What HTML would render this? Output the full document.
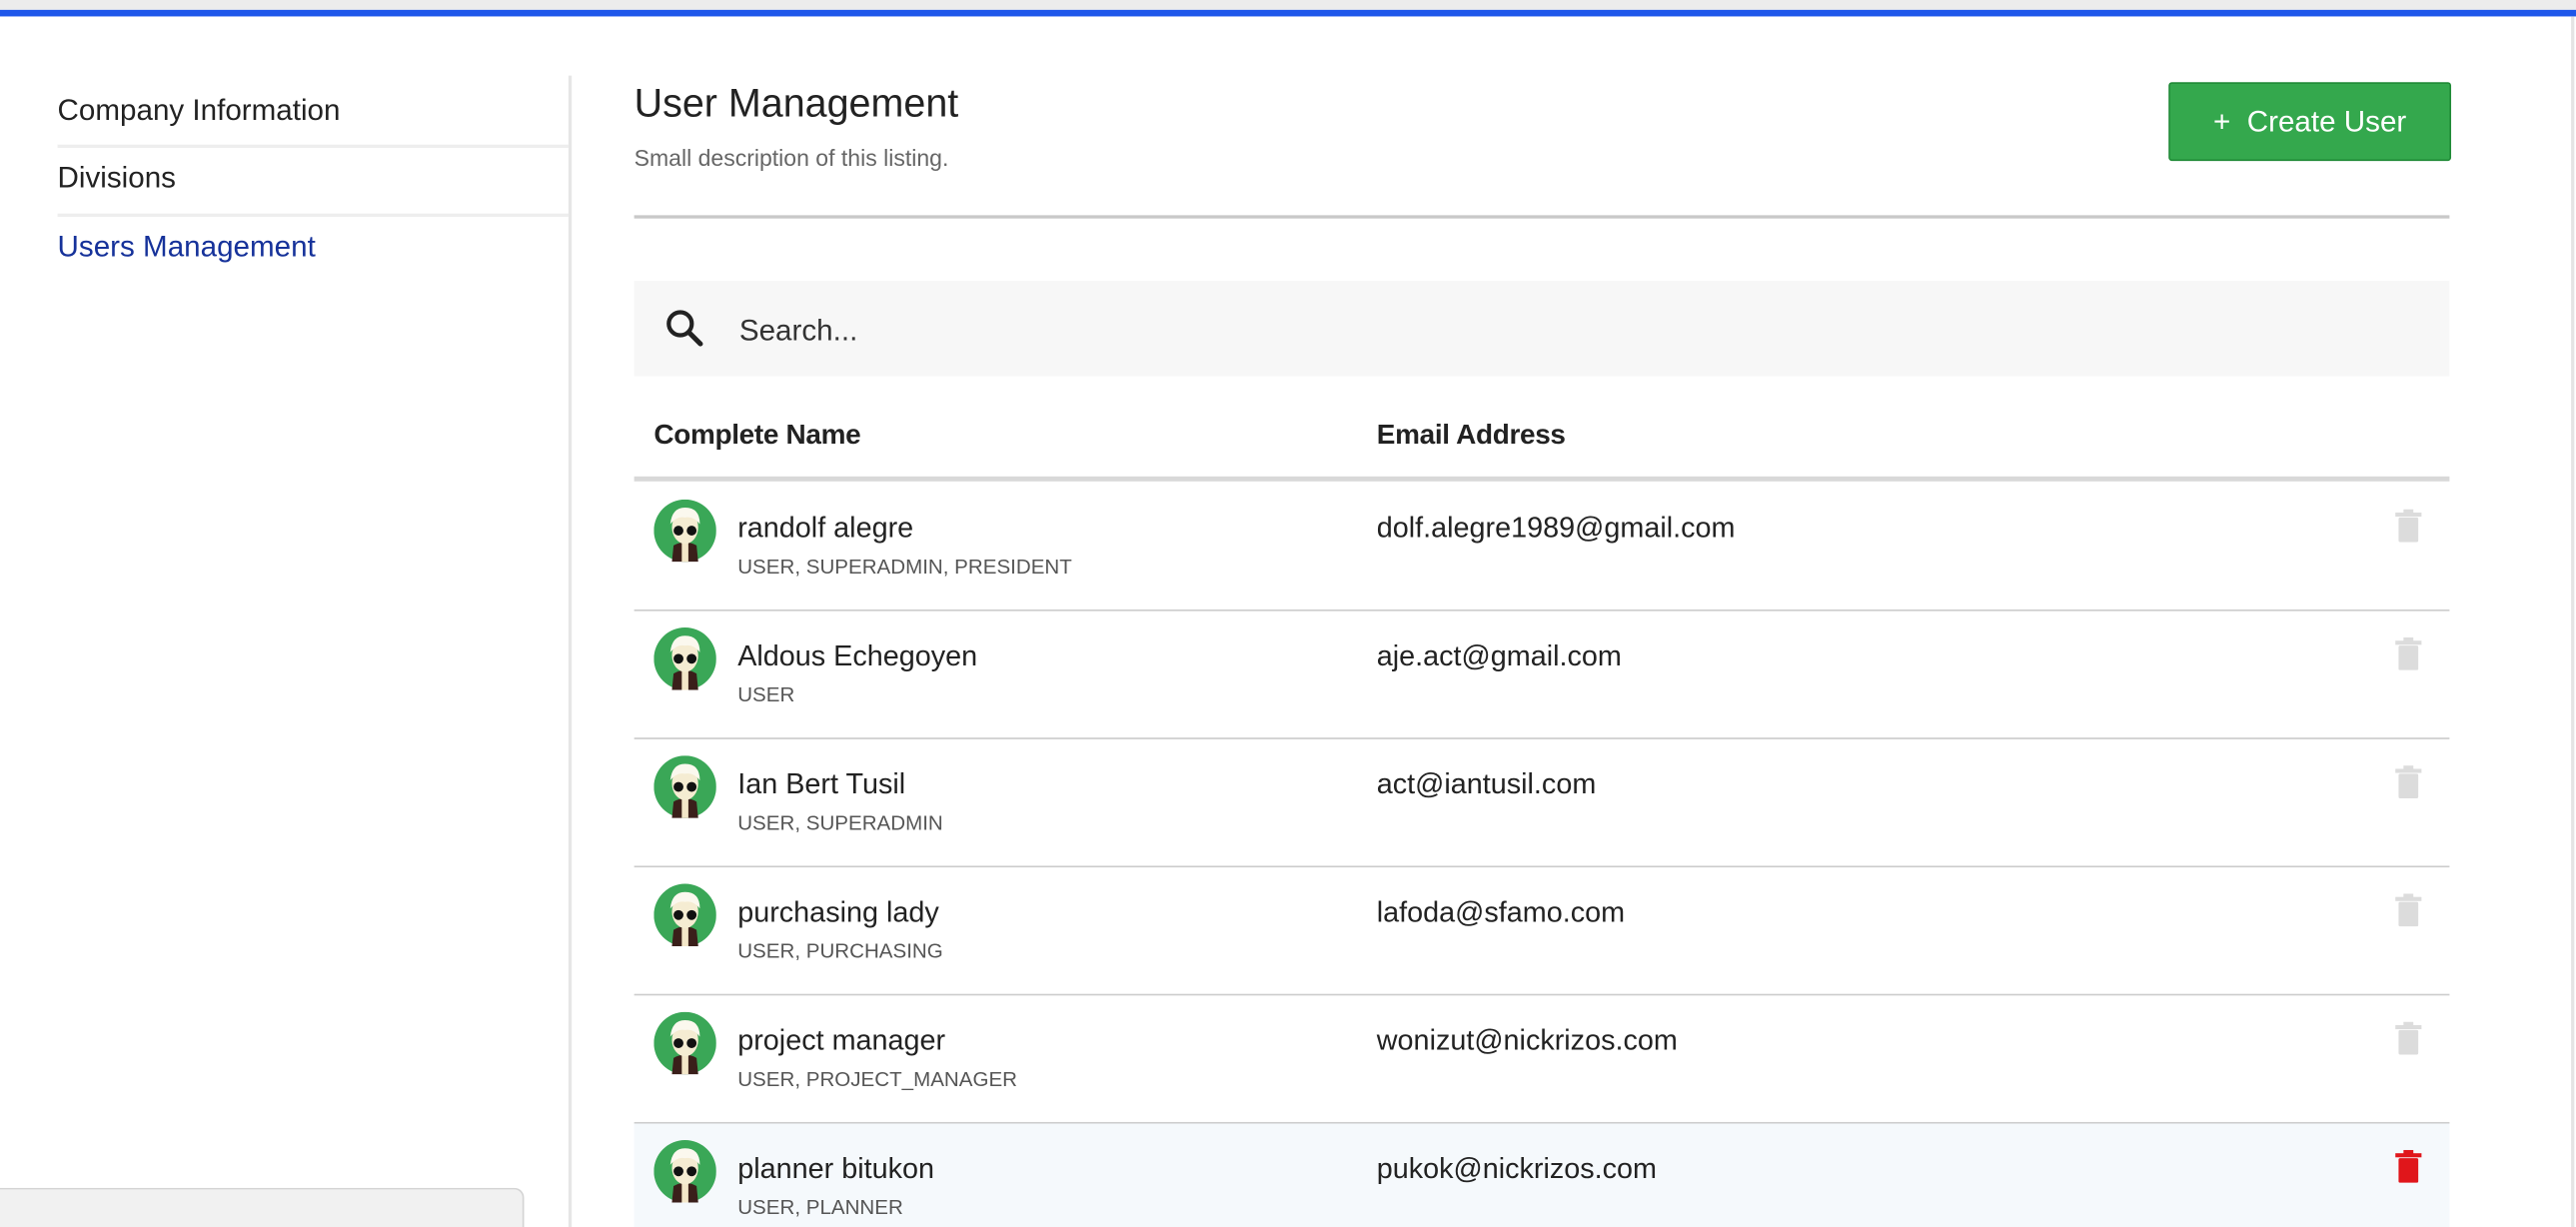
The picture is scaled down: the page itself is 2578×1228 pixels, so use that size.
<!DOCTYPE html>
<html><head><meta charset="utf-8"><style>
html,body{margin:0;padding:0;background:#fff;overflow:hidden}
body{width:2578px;height:1228px;position:relative}
#w{position:absolute;left:0;top:0;width:1568px;height:747px;transform:scale(1.64413);transform-origin:0 0;font-family:"Liberation Sans",sans-serif;color:#222}
.a{position:absolute}
.nav{position:absolute;left:35px;font-size:18px;color:#222;white-space:nowrap}
.dv{position:absolute;left:35px;width:311px;height:2px;background:#eee}
.row{position:absolute;left:386px;width:1105px;height:77px;border-bottom:1.5px solid #ccc}
.av{position:absolute;left:12px;top:10px;width:38px;height:38px}
.nm{position:absolute;left:63px;top:17px;font-size:17.5px;color:#222;white-space:nowrap}
.rl{position:absolute;left:63px;top:44px;font-size:12.5px;color:#555;white-space:nowrap}
.em{position:absolute;left:452px;top:17px;font-size:17.5px;color:#222;white-space:nowrap}
.tr{position:absolute;left:1072px;top:16px;width:16px;height:20px}
</style></head><body><div id="w">
<div class="a" style="left:0;top:0;width:1568px;height:6px;background:#ececec"></div>
<div class="a" style="left:0;top:6px;width:1568px;height:4px;background:#1f57ea"></div>
<div class="a" style="left:1565px;top:10px;width:2px;height:737px;background:#e4e4e4"></div>

<div class="nav" style="top:57px">Company Information</div>
<div class="dv" style="top:88px"></div>
<div class="nav" style="top:98px">Divisions</div>
<div class="dv" style="top:130px"></div>
<div class="nav" style="top:140px;color:#16329a">Users Management</div>
<div class="a" style="left:346px;top:46px;width:1.5px;height:701px;background:#e6e6e6"></div>
<div class="a" style="left:0;top:723px;width:318px;height:30px;background:#f1f1f1;border:1px solid #d4d4d4;border-left:none;border-radius:0 6px 0 0"></div>

<div class="a" style="left:386px;top:50px;font-size:24px;font-weight:300;color:#222;white-space:nowrap">User Management</div>
<div class="a" style="left:386px;top:88px;font-size:14px;color:#666;white-space:nowrap">Small description of this listing.</div>
<div class="a" style="left:1320px;top:50px;width:170px;height:46px;background:#34a84d;border:1px solid #1f8a36;border-radius:2px;color:#fff;font-size:18px;line-height:46px;text-align:center;white-space:nowrap">+&nbsp; Create User</div>
<div class="a" style="left:386px;top:131px;width:1105px;height:1.5px;background:#c8c8c8"></div>

<div class="a" style="left:386px;top:171px;width:1105px;height:58px;background:#f7f7f7"></div>
<svg class="a" style="left:403px;top:186px" width="28" height="28" viewBox="0 0 24 24"><circle cx="9.5" cy="9.5" r="6" fill="none" stroke="#222" stroke-width="2.2"/><path d="M14 14l6 6" stroke="#222" stroke-width="2.6" stroke-linecap="round"/></svg>
<div class="a" style="left:450px;top:191px;font-size:18px;color:#333">Search...</div>

<div class="a" style="left:398px;top:255px;font-size:17px;font-weight:bold;color:#222;letter-spacing:-.2px">Complete Name</div>
<div class="a" style="left:838px;top:255px;font-size:17px;font-weight:bold;color:#222;letter-spacing:-.2px">Email Address</div>
<div class="a" style="left:386px;top:290px;width:1105px;height:3px;background:#d8d8d8"></div>

<svg width="0" height="0" style="position:absolute"><defs>
<symbol id="av" viewBox="0 0 38 38"><circle cx="19" cy="19" r="19" fill="#3aa757"/><path d="M11 38 L12 28 Q19 24 26 28 L27 38Z" fill="#3a1f1a"/><rect x="17" y="26" width="4" height="12" fill="#f3e6c8"/><ellipse cx="19" cy="17" rx="8" ry="10" fill="#f5ecd2"/><path d="M10 15 Q11 5 19 5 Q28 5 28 15 Q24 10 19 11 Q14 10 10 15Z" fill="#fbf8ee"/><circle cx="15" cy="19" r="3" fill="#111"/><circle cx="23" cy="19" r="3" fill="#111"/></symbol>
<symbol id="tr" viewBox="0 0 16 20"><rect x="0" y="2" width="16" height="2.5" fill="currentColor"/><rect x="5" y="0" width="6" height="3" fill="currentColor"/><rect x="2" y="5" width="12" height="15" rx="1" fill="currentColor"/></symbol>
</defs></svg>

<div class="row" style="top:294px"><svg class="av"><use href="#av"/></svg><div class="nm">randolf alegre</div><div class="rl">USER, SUPERADMIN, PRESIDENT</div><div class="em">dolf.alegre1989@gmail.com</div><svg class="tr" style="color:#dcdcdc"><use href="#tr"/></svg></div>
<div class="row" style="top:372px"><svg class="av"><use href="#av"/></svg><div class="nm">Aldous Echegoyen</div><div class="rl">USER</div><div class="em">aje.act@gmail.com</div><svg class="tr" style="color:#dcdcdc"><use href="#tr"/></svg></div>
<div class="row" style="top:450px"><svg class="av"><use href="#av"/></svg><div class="nm">Ian Bert Tusil</div><div class="rl">USER, SUPERADMIN</div><div class="em">act@iantusil.com</div><svg class="tr" style="color:#dcdcdc"><use href="#tr"/></svg></div>
<div class="row" style="top:528px"><svg class="av"><use href="#av"/></svg><div class="nm">purchasing lady</div><div class="rl">USER, PURCHASING</div><div class="em">lafoda@sfamo.com</div><svg class="tr" style="color:#dcdcdc"><use href="#tr"/></svg></div>
<div class="row" style="top:606px"><svg class="av"><use href="#av"/></svg><div class="nm">project manager</div><div class="rl">USER, PROJECT_MANAGER</div><div class="em">wonizut@nickrizos.com</div><svg class="tr" style="color:#dcdcdc"><use href="#tr"/></svg></div>
<div class="row" style="top:684px;background:#f5f9fc;border-bottom:none"><svg class="av"><use href="#av"/></svg><div class="nm">planner bitukon</div><div class="rl">USER, PLANNER</div><div class="em">pukok@nickrizos.com</div><svg class="tr" style="color:#e0161b"><use href="#tr"/></svg></div>
</div></body></html>
